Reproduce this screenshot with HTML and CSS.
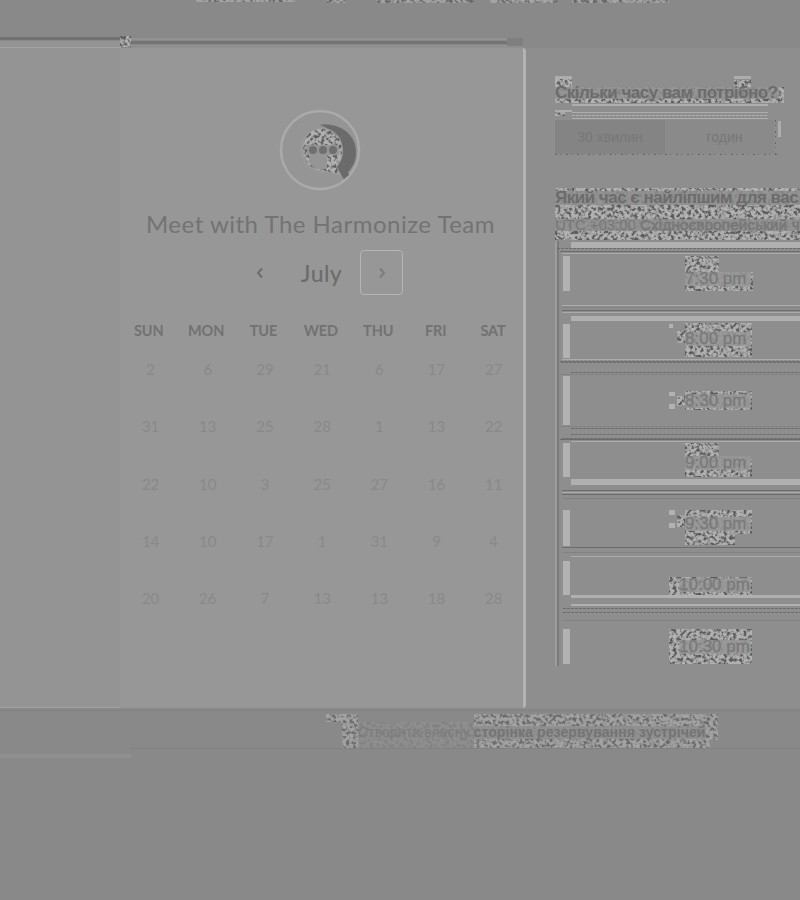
FILE: index.html
```
<!DOCTYPE html>
<html lang="uk">
<head>
<meta charset="utf-8">
<title>Meet with The Harmonize Team</title>
<link rel="stylesheet" href="styles.css">
</head>
<body>
<svg class="defs" width="0" height="0">
  <filter id="grain" x="0" y="0" width="100%" height="100%" color-interpolation-filters="sRGB">
    <feTurbulence type="fractalNoise" baseFrequency="0.3" numOctaves="2" seed="7"/>
    <feColorMatrix values="3 0 0 0 -0.95  3 0 0 0 -0.95  3 0 0 0 -0.95  0 0 0 0 1"/>
    <feComponentTransfer>
      <feFuncR type="table" tableValues="0.36 0.47 0.6 0.67 0.7"/>
      <feFuncG type="table" tableValues="0.36 0.47 0.6 0.67 0.7"/>
      <feFuncB type="table" tableValues="0.36 0.47 0.6 0.67 0.7"/>
    </feComponentTransfer>
    <feComposite in2="SourceGraphic" operator="in"/>
  </filter>
</svg>
<div class="page">
  <header class="top">
    <svg width="800" height="48">
      <g filter="url(#grain)" opacity=".7"><path d="M196 0h99v2h-99zM327 0h18v3h-18zM376 0h98v3h-98zM490 0h68v3h-68zM572 0h97v3h-97z"/></g>
      <path fill="#727272" d="M0 37h121v3H0z"/><path fill="#949494" d="M0 41h121v6H0z"/><path fill="#a2a2a2" d="M0 47h121v1H0z"/>
      <path fill="#929292" d="M131 38h376v2H131z"/><path fill="#747474" d="M131 41h376v3H131z"/><path fill="#909090" d="M131 45h392v3H131z"/>
      <path d="M120 36h11v11h-11z" filter="url(#grain)"/><path fill="#7f7f7f" d="M507 38h16v8h-16z"/>
    </svg>
  </header>
  <main class="main">
    <div class="side"></div>
    <section class="calendar">
      <svg class="logo" width="90" height="90" viewBox="0 0 90 90">
        <circle cx="45" cy="45" r="39" fill="#959595" stroke="#aaa" stroke-width="2.500"/>
        <path fill="#6b6b6b" d="M45 20C62 17 82 28 81 48c0 9-4 15-8 19l1 3-5 4-12-12C72 46 66 27 45 20z"/>
        <path fill="#999" d="M46 23c14 0 22 10 22 23 0 7-3 12-6 16l6 11-12-5c-17 2-31-8-31-23 0-12 9-22 21-22z"/>
        <path filter="url(#grain)" d="M46 24c13 0 21 10 21 22 0 7-3 12-6 15l3 8-12-3c-15 0-24-9-24-21 0-12 7-21 18-21z"/>
        <path fill="#959595" d="M35 50h17v14H41l-7-6zM32 40h32v10H32z"/>
        <g fill="#6f6f6f"><circle cx="38" cy="45" r="4"/><circle cx="48" cy="45" r="4"/><circle cx="58" cy="45" r="4"/></g>
      </svg>
      <h1 class="title">Meet with The Harmonize Team</h1>
      <div class="month">
        <button class="nav prev"><svg width="8" height="12" viewBox="0 0 8 12"><path d="M6 1.500 2 6l4 4.500"/></svg></button>
        <span class="month-name">July</span>
        <button class="nav next"><svg width="8" height="12" viewBox="0 0 8 12"><path d="M2 1.500 6 6l-4 4.500"/></svg></button>
      </div>
      <div class="week head"><span>SUN</span><span>MON</span><span>TUE</span><span>WED</span><span>THU</span><span>FRI</span><span>SAT</span></div>
      <div class="week"><span>2</span><span>6</span><span>29</span><span>21</span><span>6</span><span>17</span><span>27</span></div>
      <div class="week"><span>31</span><span>13</span><span>25</span><span>28</span><span>1</span><span>13</span><span>22</span></div>
      <div class="week"><span>22</span><span>10</span><span>3</span><span>25</span><span>27</span><span>16</span><span>11</span></div>
      <div class="week"><span>14</span><span>10</span><span>17</span><span>1</span><span>31</span><span>9</span><span>4</span></div>
      <div class="week"><span>20</span><span>26</span><span>7</span><span>13</span><span>13</span><span>18</span><span>28</span></div>
    </section>
    <section class="booking">
      <div class="duration">
        <svg class="under" width="245" height="90">
          <g filter="url(#grain)"><path d="M0 3h17v9H0zM179 5h17v7h-17zM0 12h229v16H0zM0 37h10v4H0z"/></g>
          <path fill="#909090" opacity=".8" d="M0 12h224v12H0z"/>
          <path fill="#adadad" d="M0 1h17v3H0zM179 1h17v3h-17zM17 29h196v2H17zM0 35h17v2H0zM17 37h196v1H17zM17 43h196v1H17zM223 46h3v16h-3z"/>
          <path stroke="#b0b0b0" stroke-dasharray="3 1" d="M17 40.500h196"/>
          <path stroke="#656565" stroke-dasharray="2 3 1 5" d="M0 79.500h222M220.500 45v34"/>
        </svg>
        <h2 class="question q1">Скільки часу вам потрібно?</h2>
        <div class="choices"><span class="choice on">30 хвилин</span><span class="choice">годин</span></div>
      </div>
      <div class="when">
        <svg class="under" width="245" height="54"><path filter="url(#grain)" d="M0 0h245v52H0z"/><path fill="#8e8e8e" opacity=".85" d="M0 3h245v14H0zM0 31h245v12H0z"/></svg>
        <h2 class="question q2">Який час є найліпшим для вас</h2>
        <p class="zone"><span class="utc">UTC +03:00</span> <span class="zone-name">Східноєвропейський ч</span></p>
      </div>
      <div class="slots">
        <svg class="seam" width="245" height="15"><path fill="#b0b0b0" d="M16 1h229v6H16z"/><path class="dots" d="M2 7.500h243"/><path class="dark" d="M5 10.500h240"/><path class="light" d="M7 12.500h238"/></svg>
        <div class="slot s1"><svg class="under" width="245" height="48"><path filter="url(#grain)" d="M128 0h34v16h34v19h-68z"/><path class="bar" d="M6 0h7v35H6z"/></svg><span>7:30 pm</span></div>
        <svg class="seam" width="245" height="18"><path class="light" d="M7 1.500h238M7 8.500h238"/><path class="faint" d="M7 3.500h238"/><path class="dark" d="M7 6.500h238"/><path fill="#b0b0b0" d="M16 12h229v5H16z"/></svg>
        <div class="slot s2"><svg class="under" width="245" height="36"><path filter="url(#grain)" d="M128 1h67v34h-67v-14h-8v-12h8z"/><path class="bar" d="M6 2h7v34H6zM112 2h4v4h-4z"/></svg><span>8:00 pm</span></div>
        <svg class="seam" width="245" height="18"><path class="light" d="M7 1.500h238"/><path class="dots" d="M5 3.500h240M6 4.500h239M16 14.500h229"/><path class="faint" d="M5 16.500h240"/></svg>
        <div class="slot s3"><svg class="under" width="245" height="49"><path filter="url(#grain)" d="M128 15h67v19h-67v-4h-8v-10h8z"/><path class="bar" d="M6 0h7v49H6zM112 16h6v4h-6zM112 28h6v5h-6z"/></svg><span>8:30 pm</span></div>
        <svg class="seam" width="245" height="18"><path class="faint" d="M5 1.500h240"/><path class="dark" d="M5 14.500h240"/><path class="dots" d="M16 3.500h229M16 9.500h229M7 13.500h238"/><path class="light" d="M16 16.500h229"/></svg>
        <div class="slot s4"><svg class="under" width="245" height="34"><path filter="url(#grain)" d="M128 0h34v17h33v17h-67z"/><path class="bar" d="M6 0h7v34H6z"/></svg><span>9:00 pm</span></div>
        <svg class="seam" width="245" height="23"><path fill="#b0b0b0" d="M16 2h229v6H16z"/><path class="dark" d="M7 13.500h238M7 17.500h238"/><path class="light" d="M7 15.500h238"/><path class="faint" d="M7 21.500h238"/></svg>
        <div class="slot s5"><svg class="under" width="245" height="46"><path filter="url(#grain)" d="M128 10h67v24h-17v11h-50v-18h-8v-12h8z"/><path class="bar" d="M6 10h7v36H6zM112 10h6v5h-6zM112 23h6v5h-6z"/></svg><span>9:30 pm</span></div>
        <svg class="seam" width="245" height="14"><path class="dark" d="M7 1.500h238"/><path class="faint" d="M7 6.500h238"/><path class="light" d="M16 10.500h229"/></svg>
        <div class="slot s6"><svg class="under" width="245" height="35"><path filter="url(#grain)" d="M112 17h83v18h-83z"/><path class="bar" d="M6 1h7v34H6z"/></svg><span>10:00 pm</span></div>
        <svg class="seam" width="245" height="27"><path fill="#b0b0b0" d="M16 0h229v3H16zM16 9h229v2H16z"/><path class="dots" d="M8 13.500h237M8 17.500h237"/><path class="faint" d="M7 25.500h238"/></svg>
        <div class="slot s7"><svg class="under" width="245" height="44"><path filter="url(#grain)" d="M112 7h83v35h-83z"/><path class="bar" d="M6 7h7v35H6z"/></svg><span>10:30 pm</span></div>
      </div>
    </section>
  </main>
  <footer class="bottom">
    <svg class="under" width="800" height="60">
      <path fill="#818181" d="M0 2h800v1H0zM131 40h669v1H131z"/><path fill="#8f8f8f" d="M0 46h131v4H0z"/>
      <path filter="url(#grain)" opacity=".15" d="M358 14h116v26H358z"/><path filter="url(#grain)" opacity=".65" d="M326 6h32v8h-32zM342 14h16v26h-16zM474 6h236v34H474zM710 6h8v26h-8z"/>
      <path fill="#8e8e8e" opacity=".85" d="M474 18h232v13H474z"/>
    </svg>
    <p class="create"><span>Створити власну</span> <b>сторінка резервування зустрічей</b></p>
  </footer>
</div>
</body>
</html>
```
FILE: styles.css
```
* { box-sizing: border-box; }
body { margin: 0; background: #898989; }
h1, h2, p { margin: 0; }
svg { display: block; }
.defs { position: absolute; }
.page { width: 800px; height: 900px; overflow: hidden; display: grid; grid-template-rows: 48px 660px 1fr; background: #898989; font-family: "Liberation Sans", sans-serif; color: #747474; }
.main { display: grid; grid-template-columns: 120px 406px 274px; }
.side { background: #949494; border-bottom: 1px solid #a0a0a0; }
.calendar { background: #979797; border-right: 3px solid #b3b3b3; border-top-right-radius: 3px; border-bottom-right-radius: 3px; padding-top: 57px; font-family: Lato, sans-serif; }
.logo { margin: 0 auto 0 155px; }
.title { margin-top: 13px; height: 32px; line-height: 32px; font-size: 24px; font-weight: 400; text-align: center; letter-spacing: .5px; white-space: nowrap; color: #737373; padding-right: 2px; }
.month { display: grid; grid-template-columns: 44px 57px 44px; align-items: center; justify-content: start; column-gap: 9px; padding-left: 120px; margin-top: 10px; height: 45px; }
.month-name { font-size: 23px; font-weight: 500; line-height: 32px; text-align: center; color: #6c6c6c; letter-spacing: .4px; }
.nav { width: 43px; height: 45px; padding: 0; border: 0; background: none; display: grid; place-items: center; }
.nav path { fill: none; stroke: #6c6c6c; stroke-width: 2; }
.next { border: 1px solid #b5b5b5; border-radius: 4px; margin-left: 1px; }
.prev { margin-left: -2px; }
.next path { stroke: #7c7c7c; }
.week { display: grid; grid-template-columns: repeat(7, 57.200px); height: 57.300px; line-height: 20px; font-size: 15px; text-align: center; color: #898989; padding-left: 2px; }
.head { height: 39px; margin-top: 26px; font-size: 14.500px; font-weight: 700; color: #727272; letter-spacing: -.1px; padding-left: 0; grid-template-columns: repeat(7, 57.400px); }
.head + .week { margin-top: -1px; }
.booking { background: #8e8e8e; padding-left: 29px; overflow: hidden; }
.under { position: absolute; left: 0; top: 0; }
.duration { position: relative; height: 90px; margin-top: 27px; padding-top: 8px; }
.question { position: relative; font-size: 17px; line-height: 20px; white-space: nowrap; color: #6c6c6c; }
.q1 { letter-spacing: -.5px; }
.q2 { letter-spacing: -.5px; }
.choices { position: relative; display: grid; grid-template-columns: 110px 109px; width: 219px; height: 34px; margin-top: 17px; font-size: 14px; line-height: 34px; text-align: center; color: #777; background: #8a8a8a; }
.on { background: #848484; }
.choice:last-child { padding-left: 10px; }
.when { position: relative; height: 53px; margin-top: 23px; }
.zone { position: relative; font-size: 15px; line-height: 18px; margin-top: 8px; white-space: nowrap; color: #7b7b7b; }
.utc { color: #787878; letter-spacing: -.05px; }
.zone-name { -webkit-text-stroke: .5px #747474; letter-spacing: .25px; }
.slots { border-left: 2px solid #9d9d9d; box-shadow: inset 2px 0 #797979; height: 425px; }
.seam { margin-left: -2px; }
.dark, .light, .faint, .dots { fill: none; stroke-width: 1; }
.dark { stroke: #6c6c6c; }
.light { stroke: #ababab; }
.faint { stroke: #828282; }
.dots { stroke: #6c6c6c; stroke-dasharray: 3 1; }
.bar { fill: #b2b2b2; }
.slot { position: relative; font-size: 17px; line-height: 14px; color: #7a7a7a; -webkit-text-stroke: .3px #7a7a7a; }
.slot span { position: relative; display: block; width: 66px; margin-left: 128px; white-space: nowrap; background: rgba(151, 151, 151, .85); }
.s1 { height: 48px; padding-top: 16px; }
.s2 { height: 36px; padding-top: 10px; }
.s3 { height: 49px; padding-top: 18px; }
.s4 { height: 34px; padding-top: 13px; }
.s5 { height: 46px; padding-top: 17px; }
.s6 { height: 35px; padding-top: 18px; }
.s7 { height: 44px; padding-top: 18px; }
.slot.s6 span, .slot.s7 span { margin-left: 122px; width: 72px; }
.bottom { position: relative; }
.create { position: relative; padding: 16px 0 0 358px; font-size: 14px; line-height: 17px; white-space: nowrap; color: #7c7c7c; }
.create span { letter-spacing: .1px; }
.create b { color: #747474; font-weight: 700; letter-spacing: .1px; }
```
